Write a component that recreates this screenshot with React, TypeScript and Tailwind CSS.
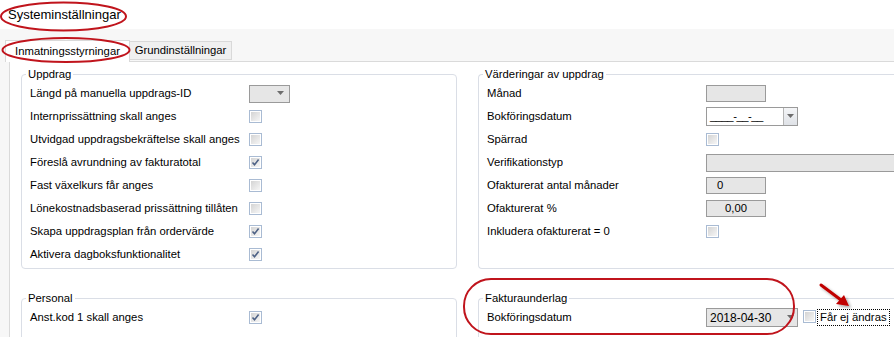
import React from "react";

function Check({ checked = false }: { checked?: boolean }) {
  return (
    <span className="relative inline-flex h-[13px] w-[13px] items-center justify-center border border-[#a9bbd3] bg-white">
      <span className="h-[9px] w-[9px] bg-gradient-to-br from-[#d4d4d4] to-[#f6f6f6]" />
      {checked && (
        <svg viewBox="0 0 9 9" className="absolute h-[9px] w-[9px]">
          <path d="M1.5 4.5 L3.5 6.8 L7.6 1.6" fill="none" stroke="#4d6185" strokeWidth="1.6" />
        </svg>
      )}
    </span>
  );
}

function Arrow() {
  return (
    <svg viewBox="0 0 9 5" className="h-[5px] w-[9px]">
      <path d="M1 0 H8 L4.5 4 Z" fill="#6d6d6d" />
    </svg>
  );
}

function Row({ label, children }: { label: string; children?: React.ReactNode }) {
  return (
    <div className="flex h-[23px] items-center">
      <span className="w-[219px] shrink-0 whitespace-nowrap">{label}</span>
      {children}
    </div>
  );
}

function Group({
  title,
  className,
  children,
}: {
  title: string;
  className?: string;
  children: React.ReactNode;
}) {
  return (
    <fieldset className={`rounded-[4px] border border-[#dadee6] pl-[8px] ${className ?? ""}`}>
      <legend className="-ml-[4px] px-[2px] leading-[14px]">{title}</legend>
      {children}
    </fieldset>
  );
}

function GrayBox({ value, align = "center" }: { value?: string; align?: "center" | "left" }) {
  return (
    <span
      className={`flex h-[17px] w-[60px] items-center border border-[#9a9a9a] bg-[#e6e6e6] ${
        align === "center" ? "justify-center" : "pl-[10px]"
      }`}
    >
      {value}
    </span>
  );
}

export default function App() {
  return (
    <div
      className="relative h-[337px] w-[894px] overflow-hidden bg-white text-[11.3px] text-black"
      style={{ fontFamily: '"Liberation Sans", Arial, sans-serif' }}
    >
      {/* Title */}
      <div className="flex h-[29px] items-center pl-[8px] text-[13px]">Systeminställningar</div>

      {/* Tab strip */}
      <div className="flex h-[32px] items-end bg-[#f7f7f7] pl-[5px]">
        <div className="relative -mb-px flex h-[22px] w-[125px] items-center justify-center border border-b-0 border-[#d9d9d9] bg-white">
          Inmatningsstyrningar
        </div>
        <div className="mb-px flex h-[19px] w-[102px] items-center justify-center border border-l-0 border-[#d9d9d9] bg-[#f0f0f0]">
          Grundinställningar
        </div>
      </div>

      {/* Tab content */}
      <div className="flex bg-[#f7f7f7] pl-[9px]">
        <div className="grid flex-1 grid-cols-[436px_1fr] gap-x-[21px] border-l border-t border-[#dadada] bg-white pl-[11px] pt-[5px]">
          <Group title="Uppdrag" className="h-[202px]">
            <div className="pt-[1px]">
              <Row label="Längd på manuella uppdrags-ID">
                <span className="flex h-[18px] w-[41px] items-center justify-end border border-[#9a9a9a] bg-[#e6e6e6] pr-[4px]">
                  <Arrow />
                </span>
              </Row>
              <Row label="Internprissättning skall anges">
                <Check />
              </Row>
              <Row label="Utvidgad uppdragsbekräftelse skall anges">
                <Check />
              </Row>
              <Row label="Föreslå avrundning av fakturatotal">
                <Check checked />
              </Row>
              <Row label="Fast växelkurs får anges">
                <Check />
              </Row>
              <Row label="Lönekostnadsbaserad prissättning tillåten">
                <Check />
              </Row>
              <Row label="Skapa uppdragsplan från ordervärde">
                <Check checked />
              </Row>
              <Row label="Aktivera dagboksfunktionalitet">
                <Check checked />
              </Row>
            </div>
          </Group>

          <Group title="Värderingar av uppdrag" className="-mr-[6px] h-[202px] rounded-r-none border-r-0">
            <div className="pt-[1px]">
              <Row label="Månad">
                <GrayBox />
              </Row>
              <Row label="Bokföringsdatum">
                <span className="flex h-[19px] w-[92px] items-stretch border border-[#9a9a9a] bg-white">
                  <span className="flex flex-1 items-center pl-[3px] tracking-[-0.5px]">____-__-__</span>
                  <span className="flex w-[14px] items-center justify-center border-l border-[#b5b5b5] bg-gradient-to-b from-[#f4f5f7] to-[#dfe2e7]">
                    <Arrow />
                  </span>
                </span>
              </Row>
              <Row label="Spärrad">
                <Check />
              </Row>
              <Row label="Verifikationstyp">
                <span className="flex h-[18px] flex-1 items-center justify-end border border-r-0 border-[#9a9a9a] bg-[#e6e6e6]">
                  <span className="-mr-[4px]">
                    <Arrow />
                  </span>
                </span>
              </Row>
              <Row label="Ofakturerat antal månader">
                <GrayBox value="0" align="left" />
              </Row>
              <Row label="Ofakturerat %">
                <GrayBox value="0,00" />
              </Row>
              <Row label="Inkludera ofakturerat = 0">
                <Check />
              </Row>
            </div>
          </Group>

          <Group title="Personal" className="mt-[22px] h-[60px]">
            <div className="pt-[1px]">
              <Row label="Anst.kod 1 skall anges">
                <Check checked />
              </Row>
            </div>
          </Group>

          <Group title="Fakturaunderlag" className="-mr-[6px] mt-[22px] h-[60px] rounded-r-none border-r-0">
            <div className="pt-[1px]">
              <Row label="Bokföringsdatum">
                <span className="flex h-[19px] w-[92px] items-stretch border border-[#9a9a9a] bg-[#e6e6e6]">
                  <span className="flex flex-1 items-center pl-[3px] text-[12px]">2018-04-30</span>
                  <span className="flex w-[14px] items-center justify-center">
                    <Arrow />
                  </span>
                </span>
                <span className="ml-[5px]">
                  <Check />
                </span>
                <span className="ml-[1px] border border-dotted border-black px-[2px] leading-[15px]">
                  Får ej ändras
                </span>
              </Row>
            </div>
          </Group>
        </div>
      </div>

      {/* Annotations */}
      <svg className="pointer-events-none absolute left-0 top-0 z-20" width="894" height="337">
        <defs>
          <filter id="sh" x="-50%" y="-50%" width="200%" height="200%">
            <feDropShadow dx="2" dy="2" stdDeviation="1.5" floodColor="#000" floodOpacity="0.35" />
          </filter>
        </defs>
        <ellipse cx="63.5" cy="16.5" rx="62.5" ry="14" fill="none" stroke="#c0141c" strokeWidth="2" />
        <ellipse cx="66" cy="50" rx="63.5" ry="12" fill="none" stroke="#c0141c" strokeWidth="2" />
        <rect x="464" y="279" width="330" height="55" rx="27" fill="none" stroke="#c0141c" strokeWidth="2" />
        <g filter="url(#sh)">
          <path d="M821 285 L841 300" stroke="#c00000" strokeWidth="3" strokeLinecap="round" />
          <path d="M849 306 L836 304 L844 295 Z" fill="#c00000" />
        </g>
      </svg>
    </div>
  );
}
